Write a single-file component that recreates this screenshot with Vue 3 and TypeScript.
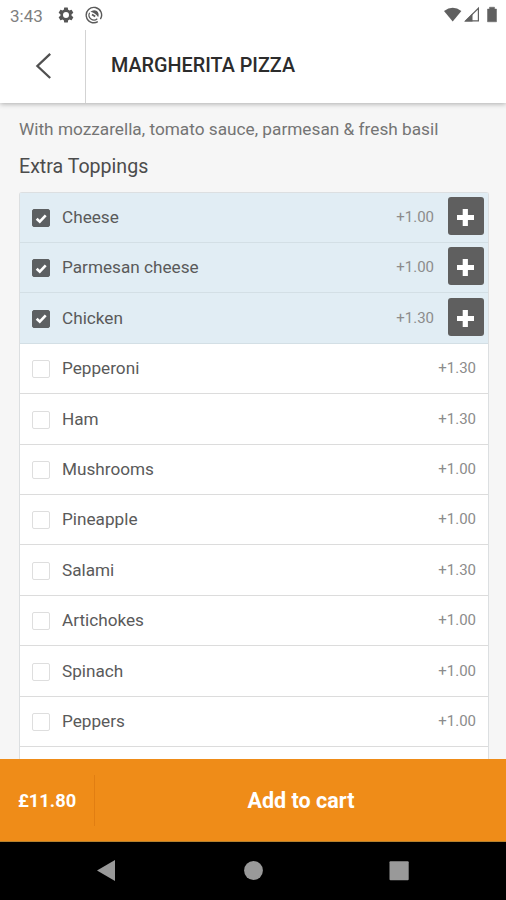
<script setup lang="ts">
import { ref, computed } from 'vue'

interface Topping {
  name: string
  price: number
  selected: boolean
}

const toppings = ref<Topping[]>([
  { name: 'Cheese', price: 1, selected: true },
  { name: 'Parmesan cheese', price: 1, selected: true },
  { name: 'Chicken', price: 1.3, selected: true },
  { name: 'Pepperoni', price: 1.3, selected: false },
  { name: 'Ham', price: 1.3, selected: false },
  { name: 'Mushrooms', price: 1, selected: false },
  { name: 'Pineapple', price: 1, selected: false },
  { name: 'Salami', price: 1.3, selected: false },
  { name: 'Artichokes', price: 1, selected: false },
  { name: 'Spinach', price: 1, selected: false },
  { name: 'Peppers', price: 1, selected: false },
])

const basePrice = 8.5
const total = computed(() =>
  toppings.value.reduce((sum, t) => sum + (t.selected ? t.price : 0), basePrice).toFixed(2),
)
</script>

<template>
  <div class="screen">
    <div class="status">
      <span class="clock">3:43</span>
      <svg class="gear" viewBox="0 0 24 24" width="18" height="18">
        <path fill="#555" fill-rule="evenodd" d="M19.4 13c.04-.3.06-.65.06-1s-.02-.7-.07-1l2.1-1.65a.5.5 0 0 0 .12-.63l-2-3.46a.5.5 0 0 0-.6-.22l-2.5 1a7.3 7.3 0 0 0-1.7-.98l-.37-2.65A.5.5 0 0 0 14 2h-4a.5.5 0 0 0-.5.42l-.37 2.65c-.6.24-1.18.57-1.7.98l-2.48-1a.5.5 0 0 0-.61.22l-2 3.46a.5.5 0 0 0 .12.63L4.57 11a8 8 0 0 0 0 2l-2.1 1.65a.5.5 0 0 0-.13.63l2 3.46c.13.22.39.3.6.22l2.5-1c.51.4 1.08.74 1.7.98l.37 2.64c.04.24.24.42.49.42h4c.25 0 .46-.18.49-.42l.37-2.64a7.3 7.3 0 0 0 1.7-.98l2.5 1c.22.08.47 0 .6-.22l2-3.46a.5.5 0 0 0-.12-.63zM12 16a4 4 0 1 1 0-8 4 4 0 0 1 0 8z" />
      </svg>
      <svg class="sync" viewBox="0 0 18 18" width="18" height="18" fill="none" stroke="#5a5a5a">
        <path d="M15.400 13.200A7.700 7.700 0 1 0 12.800 15.700" stroke-width="1.400" />
        <path d="M12.300 12.800A5 5 0 0 1 4.600 6.700" stroke-width="1.200" />
        <path d="M5.400 5.800Q8.500 3.200 11.900 5.100Q14.500 7.500 13.200 11.200Q10.500 7 5.400 5.800Z" fill="#5a5a5a" stroke="none" />
        <path d="M7 8.600L10.200 10.600" stroke-width="1.800" />
      </svg>
      <span class="grow"></span>
      <svg viewBox="0 0 54 18" width="54" height="18">
        <path d="M0 5Q8.700 -1.500 17.400 5L8.700 15.600Z" fill="#606060" />
        <path d="M21.600 14.900L34.400 2.200V14.900Z" fill="none" stroke="#606060" stroke-width="1.200" />
        <path d="M20.500 15.500L28.500 7.500V15.500Z" fill="#606060" />
        <path d="M43.500 3h2V1.200h5V3h2v12.800h-9Z" fill="#606060" stroke="#606060" stroke-width=".5" stroke-linejoin="round" />
      </svg>
    </div>
    <header class="header">
      <button class="back" aria-label="Back">
        <svg viewBox="0 0 18 28" width="18" height="28" fill="none" stroke="#505050" stroke-width="2.300">
          <path d="M15.200 1.800L2.400 14L15.200 26" />
        </svg>
      </button>
      <h1 class="title">MARGHERITA PIZZA</h1>
    </header>
    <main class="content">
      <p class="description">With mozzarella, tomato sauce, parmesan &amp; fresh basil</p>
      <h2 class="subtitle">Extra Toppings</h2>
      <ul class="list">
        <li v-for="t in toppings" :key="t.name" class="row" :class="{ selected: t.selected }" @click="t.selected = !t.selected">
          <span class="box">
            <svg v-if="t.selected" viewBox="0 0 17 17" width="17" height="17" fill="none" stroke="#fff" stroke-width="2.800">
              <path d="M3.900 8.700L7.200 11.800L13.500 5.200" />
            </svg>
          </span>
          <span class="name">{{ t.name }}</span>
          <span class="price">+{{ t.price.toFixed(2) }}</span>
          <button v-if="t.selected" class="plus" aria-label="Add another" @click.stop>
            <svg viewBox="0 0 17 17" width="17" height="17">
              <path d="M5.700 0h5.200v5.900h6.100v5.200h-6.100v5.900h-5.200v-5.900H0v-5.200h5.700z" fill="#fff" />
            </svg>
          </button>
        </li>
        <li class="row"></li>
      </ul>
    </main>
    <footer class="cart">
      <span class="total">£{{ total }}</span>
      <span class="add">Add to cart</span>
    </footer>
    <nav class="nav">
      <svg viewBox="0 0 506 58" width="506" height="58" fill="#999">
        <path d="M97 28.500L115 18V39Z" />
        <circle cx="253.500" cy="28.500" r="9.400" />
        <rect x="389.500" y="19.300" width="19.200" height="19" rx="1" />
      </svg>
    </nav>
  </div>
</template>

<style>
body {
  margin: 0;
}
</style>

<style scoped>
.screen {
  width: 506px;
  height: 900px;
  display: flex;
  flex-direction: column;
  overflow: hidden;
  background: #f6f6f6;
  font-family: Roboto, "Liberation Sans", sans-serif;
}
button {
  border: 0;
  padding: 0;
  background: none;
}
.status {
  flex: none;
  box-sizing: border-box;
  height: 30px;
  padding: 0 8px 0 10px;
  display: flex;
  align-items: center;
  background: #fff;
}
.clock {
  width: 47px;
  font-size: 17px;
  line-height: 30px;
  padding-top: 1px;
  color: #808080;
}
.sync {
  margin-left: 9.500px;
}
.grow {
  flex: 1;
}
.header {
  flex: none;
  position: relative;
  height: 73px;
  display: flex;
  background: #fff;
  box-shadow: 0 1px 5px rgba(0, 0, 0, 0.3);
  clip-path: inset(0 0 -10px 0);
}
.back {
  box-sizing: border-box;
  width: 86px;
  padding: 0 0 2px 2px;
  border-right: 1px solid #d3d3d3;
  display: flex;
  align-items: center;
  justify-content: center;
}
.title {
  margin: 0 0 0 25px;
  font-size: 19.800px;
  font-weight: 500;
  line-height: 72px;
  color: #2c2c2c;
}
.content {
  flex: 1;
  min-height: 0;
  overflow: hidden;
  padding: 0 17px 0 19px;
}
.description {
  margin: 16px 0 0;
  font-size: 17.240px;
  line-height: 21px;
  color: #747474;
  white-space: nowrap;
}
.subtitle {
  margin: 14px 0 0;
  font-size: 19.600px;
  font-weight: 400;
  line-height: 25px;
  color: #4c4c4c;
}
.list {
  margin: 12.600px 0 0;
  padding: 0;
  list-style: none;
  border: 1px solid #dcdfe1;
  border-width: 1px 1px 0;
  border-radius: 3px 3px 0 0;
  background: #fff;
}
.row {
  box-sizing: border-box;
  height: 50.400px;
  padding: 0 12px;
  display: flex;
  align-items: center;
  border-bottom: 1px solid #dcdcdc;
}
.row.selected {
  padding-right: 4px;
  background: #e1edf4;
  border-bottom-color: #d3dfe5;
}
.box {
  box-sizing: border-box;
  width: 18px;
  height: 18px;
  margin-top: 1.600px;
  border: 1px solid #dedede;
  border-radius: 2px;
  display: flex;
  align-items: center;
  justify-content: center;
}
.selected .box {
  background: #5d6062;
  border-color: #5d6062;
}
.name {
  flex: 1;
  margin: -0.500px 0 0 12px;
  font-size: 17.180px;
  color: #5a5a5a;
}
.price {
  margin-top: -0.500px;
  font-size: 15px;
  color: #8c8c8c;
}
.plus {
  width: 36px;
  height: 38px;
  margin: 0 0 3px 14px;
  border-radius: 3px;
  background: #5f5f5f;
  display: flex;
  align-items: center;
  justify-content: center;
}
.plus svg {
  margin: 3px 1px 0 0;
}
.cart {
  flex: none;
  box-sizing: border-box;
  height: 83px;
  display: flex;
  align-items: center;
  background: #ef8c18;
  border-bottom: 1px solid #b5812f;
  color: #fff;
  font-weight: 700;
}
.total {
  box-sizing: border-box;
  width: 95px;
  padding: 1px 0 0 18px;
  border-right: 1px solid #e17e12;
  font-size: 18.300px;
  line-height: 50px;
}
.add {
  flex: 1;
  padding: 1px 0 0 1px;
  text-align: center;
  font-size: 21.500px;
}
.nav {
  flex: none;
  height: 58px;
  background: #000;
}
.nav svg {
  display: block;
}
</style>
